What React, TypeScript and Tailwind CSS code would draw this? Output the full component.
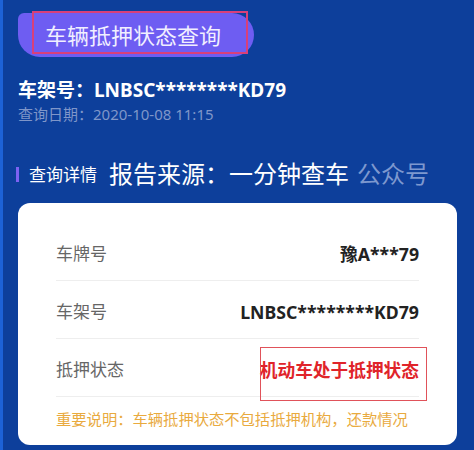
import React from "react";

const rows = [
  { label: "车牌号", value: "豫A***79" },
  { label: "车架号", value: "LNBSC********KD79" },
];

export default function App() {
  return (
    <div
      className="relative w-[474px] h-[450px] overflow-hidden bg-[#0d3f9b] border-l-[3px] border-[#1d62d6]"
      style={{ fontFamily: '"Noto Sans", "Noto Sans CJK SC", sans-serif' }}
    >
      <div className="pl-[15px] pr-[14px] pt-[13px]">
        <div className="relative w-[236px] h-[44px] bg-[#6e5df2] rounded-[6px_22px_22px_22px] flex items-center pl-[27px]">
          <span className="text-[22px] leading-none text-[#f1efff]">车辆抵押状态查询</span>
          <div className="absolute left-[14px] top-[-2px] w-[216px] h-[43px] border-2 border-solid border-[#d8407a]" />
        </div>

        <div className="mt-[21px] text-[19px] leading-[24px] font-bold text-white">
          车架号：LNBSC********KD79
        </div>
        <div className="mt-[3px] text-[15px] leading-[18px] text-[#7f96c9]">
          查询日期：2020-10-08 11:15
        </div>

        <div className="mt-[36px] flex items-center h-[30px]">
          <div className="w-[3px] h-[15px] bg-[#7d62f3] mr-[10px] ml-[-2px]" />
          <span className="text-[17px] leading-none text-white">查询详情</span>
          <span className="ml-[12px] text-[24px] leading-none text-white">报告来源：一分钟查车</span>
          <span className="ml-[8px] text-[24px] leading-none text-[#7d98cf]">公众号</span>
        </div>

        <div className="mt-[14px] mr-[3px] bg-white rounded-[12px] px-[38px] pt-[20px] pb-[16px]">
          {rows.map((r) => (
            <div
              key={r.label}
              className="h-[58px] flex items-center justify-between border-b border-[#eeeeee] pt-[5px]"
            >
              <span className="text-[17px] text-[#666666]">{r.label}</span>
              <span className="text-[17.7px] font-bold text-[#222222]">{r.value}</span>
            </div>
          ))}
          <div className="relative h-[58px] flex items-center justify-between border-b border-[#eeeeee] pt-[5px]">
            <span className="text-[17px] text-[#666666]">抵押状态</span>
            <span className="text-[17.7px] font-bold text-[#e0242a]">机动车处于抵押状态</span>
            <div className="absolute right-[-8px] top-[8px] w-[167px] h-[54px] border-[1.5px] border-solid border-[#e0525a]" />
          </div>
          <div className="mt-[12px] text-[15.3px] leading-[20px] text-[#e9aa3e] whitespace-nowrap">
            重要说明：车辆抵押状态不包括抵押机构，还款情况
          </div>
        </div>
      </div>
    </div>
  );
}
